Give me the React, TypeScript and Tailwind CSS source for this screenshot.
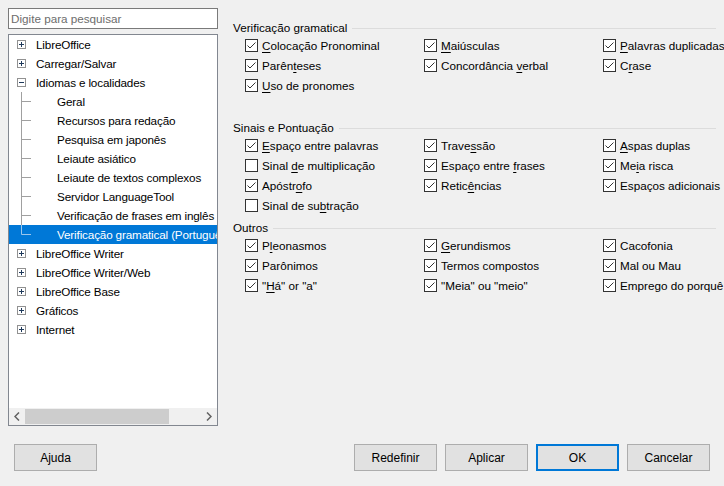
import React from "react";

type Item = { label: string; u?: number; checked?: boolean };

const FONT = { fontFamily: '"Liberation Sans", Arial, sans-serif' };

const treeTop = [
  { label: "LibreOffice", kind: "closed" },
  { label: "Carregar/Salvar", kind: "closed" },
  { label: "Idiomas e localidades", kind: "open" },
];

const treeChildren = [
  "Geral",
  "Recursos para redação",
  "Pesquisa em japonês",
  "Leiaute asiático",
  "Leiaute de textos complexos",
  "Servidor LanguageTool",
  "Verificação de frases em inglês",
  "Verificação gramatical (Português do Brasil)",
];

const treeBottom = [
  "LibreOffice Writer",
  "LibreOffice Writer/Web",
  "LibreOffice Base",
  "Gráficos",
  "Internet",
];

// sections: each row has up to 3 columns, u = index of underlined char
const sections: { title: string; rows: (Item | null)[][] }[] = [
  {
    title: "Verificação gramatical",
    rows: [
      [
        { label: "Colocação Pronominal", u: 0, checked: true },
        { label: "Maiúsculas", u: 0, checked: true },
        { label: "Palavras duplicadas", u: 0, checked: true },
      ],
      [
        { label: "Parênteses", u: 5, checked: true },
        { label: "Concordância verbal", u: 13, checked: true },
        { label: "Crase", u: 1, checked: true },
      ],
      [{ label: "Uso de pronomes", u: 0, checked: true }, null, null],
      [null, null, null],
    ],
  },
  {
    title: "Sinais e Pontuação",
    rows: [
      [
        { label: "Espaço entre palavras", u: 0, checked: true },
        { label: "Travessão", u: 5, checked: true },
        { label: "Aspas duplas", u: 0, checked: true },
      ],
      [
        { label: "Sinal de multiplicação", u: 6, checked: false },
        { label: "Espaço entre frases", u: 13, checked: true },
        { label: "Meia risca", u: 2, checked: true },
      ],
      [
        { label: "Apóstrofo", u: 6, checked: true },
        { label: "Reticências", u: 5, checked: true },
        { label: "Espaços adicionais", checked: true },
      ],
      [{ label: "Sinal de subtração", u: 11, checked: false }, null, null],
    ],
  },
  {
    title: "Outros",
    rows: [
      [
        { label: "Pleonasmos", u: 1, checked: true },
        { label: "Gerundismos", u: 0, checked: true },
        { label: "Cacofonia", checked: true },
      ],
      [
        { label: "Parônimos", checked: true },
        { label: "Termos compostos", checked: true },
        { label: "Mal ou Mau", checked: true },
      ],
      [
        { label: '"Há" or "a"', u: 1, checked: true },
        { label: '"Meia" ou "meio"', checked: true },
        { label: "Emprego do porquê", checked: true },
      ],
      [null, null, null],
    ],
  },
];

function Expander({ open }: { open: boolean }) {
  return (
    <svg width="9" height="9" viewBox="0 0 9 9" className="shrink-0">
      <rect x="0.5" y="0.5" width="8" height="8" fill="#fff" stroke="#919191" />
      <line x1="2" y1="4.5" x2="7" y2="4.5" stroke="#1e395b" />
      {!open && <line x1="4.5" y1="2" x2="4.5" y2="7" stroke="#1e395b" />}
    </svg>
  );
}

function CheckBox({ checked }: { checked?: boolean }) {
  return (
    <svg width="13" height="13" viewBox="0 0 13 13" className="shrink-0">
      <rect x="0.5" y="0.5" width="12" height="12" fill="#fff" stroke="#333" />
      {checked && (
        <path d="M2.5 6.5 L5 9 L10.5 3.5" fill="none" stroke="#333" strokeWidth="1" />
      )}
    </svg>
  );
}

function Label({ text, u }: { text: string; u?: number }) {
  if (u === undefined) return <span>{text}</span>;
  return (
    <span>
      {text.slice(0, u)}
      <span className="underline underline-offset-2">{text[u]}</span>
      {text.slice(u + 1)}
    </span>
  );
}

function Button({ children, primary }: { children: React.ReactNode; primary?: boolean }) {
  return (
    <button
      className={
        primary
          ? "h-[27px] w-[83px] border-2 border-[#0078d7] bg-[#e1e1e1] text-[12px] text-black"
          : "h-[27px] w-[83px] border border-[#adadad] bg-[#e1e1e1] text-[12px] text-black"
      }
    >
      {children}
    </button>
  );
}

export default function App() {
  return (
    <div
      className="flex h-[486px] w-[724px] flex-col overflow-hidden bg-[#f0f0f0] pt-2 text-[11.7px] text-black"
      style={FONT}
    >
      <div className="flex">
        {/* left column */}
        <div className="ml-2 flex w-[210px] shrink-0 flex-col">
          <div className="flex h-[21px] items-center border border-[#7a7a7a] bg-white px-[2px] text-[#6d6d6d]">
            Digite para pesquisar
          </div>
          <div className="mt-[5px] flex h-[392px] flex-col border border-[#828790] bg-white">
            <div className="flex-1 overflow-hidden whitespace-nowrap tracking-[-0.15px]">
              {treeTop.map((t) => (
                <div key={t.label} className="flex h-[19px] items-center pl-2">
                  <Expander open={t.kind === "open"} />
                  <span className="ml-[10px]">{t.label}</span>
                </div>
              ))}
              {treeChildren.map((c, i) => {
                const last = i === treeChildren.length - 1;
                return (
                  <div
                    key={c}
                    className={
                      last
                        ? "flex h-[19px] items-center bg-[#0078d7] pl-2 text-white"
                        : "flex h-[19px] items-center pl-2"
                    }
                  >
                    <svg width="40" height="19" viewBox="0 0 40 19" className="shrink-0">
                      <line
                        x1="4.5"
                        y1="0"
                        x2="4.5"
                        y2={last ? 9.5 : 19}
                        stroke={last ? "#9cc6ec" : "#a0a0a0"}
                      />
                      <line
                        x1="4.5"
                        y1="9.5"
                        x2="14"
                        y2="9.5"
                        stroke={last ? "#9cc6ec" : "#a0a0a0"}
                      />
                    </svg>
                    <span>{c}</span>
                  </div>
                );
              })}
              {treeBottom.map((t) => (
                <div key={t} className="flex h-[19px] items-center pl-2">
                  <Expander open={false} />
                  <span className="ml-[10px]">{t}</span>
                </div>
              ))}
            </div>
            {/* horizontal scrollbar */}
            <div className="flex h-[17px] items-center bg-[#f0f0f0]">
              <div className="flex w-[16px] justify-center">
                <svg width="6" height="9" viewBox="0 0 6 9">
                  <path d="M5 0.5 L1 4.5 L5 8.5" fill="none" stroke="#606060" strokeWidth="1.5" />
                </svg>
              </div>
              <div className="h-[15px] w-[144px] bg-[#cdcdcd]" />
              <div className="flex-1" />
              <div className="flex w-[16px] justify-center">
                <svg width="6" height="9" viewBox="0 0 6 9">
                  <path d="M1 0.5 L5 4.5 L1 8.5" fill="none" stroke="#606060" strokeWidth="1.5" />
                </svg>
              </div>
            </div>
          </div>
        </div>

        {/* right panel */}
        <div className="ml-[15px] flex w-[483px] shrink-0 flex-col gap-[4px] pt-[12px]">
          {sections.map((s) => (
            <div key={s.title} className="flex flex-col">
              <div className="flex h-[16px] items-center">
                <span className="whitespace-nowrap">{s.title}</span>
                <div className="ml-[5px] h-px flex-1 bg-[#dcdcdc]" />
              </div>
              {s.rows.map((row, ri) => (
                <div key={ri} className="ml-3 grid h-[20px] grid-cols-[179px_179px_179px] items-center">
                  {row.map((item, ci) =>
                    item ? (
                      <div key={ci} className="flex items-center gap-[4px] whitespace-nowrap">
                        <CheckBox checked={item.checked} />
                        <Label text={item.label} u={item.u} />
                      </div>
                    ) : (
                      <div key={ci} />
                    )
                  )}
                </div>
              ))}
            </div>
          ))}
        </div>
      </div>

      {/* buttons */}
      <div className="mt-[18px] flex items-center px-[14px]">
        <Button>Ajuda</Button>
        <div className="flex-1" />
        <div className="flex gap-2">
          <Button>Redefinir</Button>
          <Button>Aplicar</Button>
          <Button primary>OK</Button>
          <Button>Cancelar</Button>
        </div>
      </div>
    </div>
  );
}
